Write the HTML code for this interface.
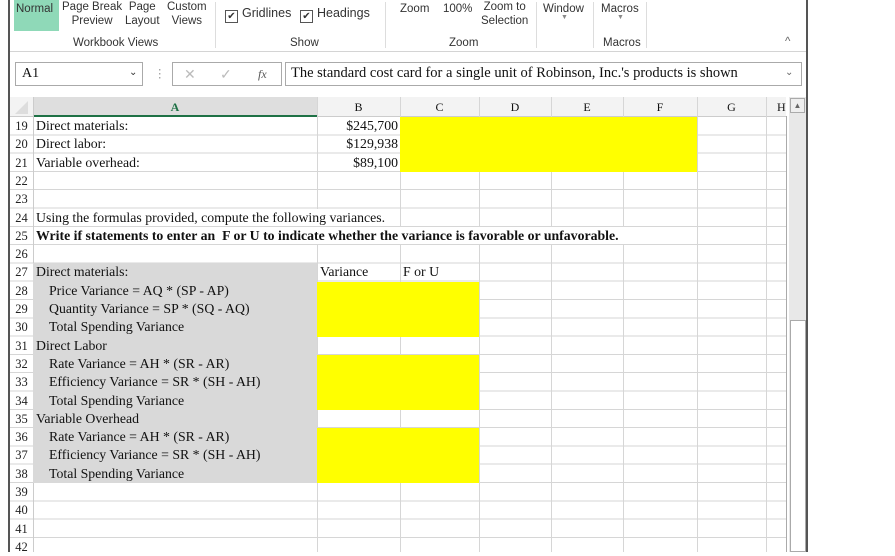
<!DOCTYPE html>
<html><head><style>
body{margin:0;width:895px;height:552px;overflow:hidden;background:#fff;position:relative;font-family:"Liberation Serif",serif;}
.a{position:absolute;}
.s{font-family:"Liberation Sans",sans-serif;font-size:11.5px;color:#333;}
.t{font-size:13.8px;color:#111;white-space:nowrap;line-height:18px;}
.rn{position:absolute;left:10px;width:23px;text-align:center;font-size:12.5px;color:#222;line-height:18px;}
.cb{display:inline-block;width:11px;height:11px;border:1px solid #555;vertical-align:-2px;margin-right:4px;font-size:10px;line-height:11px;text-align:center;}
.v{position:absolute;top:97px;width:1px;height:455px;background:#d6d6d6}
</style></head><body>
<div class="a" style="left:8px;top:0;width:2px;height:552px;background:#555"></div>
<div class="a" style="left:806px;top:0;width:2px;height:552px;background:#555"></div>
<div class="a" style="left:14px;top:0;width:45px;height:31px;background:#8fd9b8"></div>
<div class="a s" style="left:16px;top:3px">Normal</div>
<div class="a s" style="left:62px;top:0;text-align:center;line-height:14px">Page Break<br>Preview</div>
<div class="a s" style="left:125px;top:0;text-align:center;line-height:14px">Page<br>Layout</div>
<div class="a s" style="left:167px;top:0;text-align:center;line-height:14px">Custom<br>Views</div>
<div class="a s" style="left:73px;top:37px">Workbook Views</div>
<div class="a" style="left:215px;top:2px;width:1px;height:46px;background:#ddd"></div>
<div class="a s" style="left:225px;top:6px;font-size:12.5px"><span class="cb">✔</span>Gridlines</div>
<div class="a s" style="left:300px;top:6px;font-size:12.5px"><span class="cb">✔</span>Headings</div>
<div class="a s" style="left:290px;top:37px">Show</div>
<div class="a" style="left:385px;top:2px;width:1px;height:46px;background:#ddd"></div>
<div class="a s" style="left:400px;top:3px">Zoom</div>
<div class="a s" style="left:443px;top:3px">100%</div>
<div class="a s" style="left:481px;top:0;text-align:center;line-height:14px">Zoom to<br>Selection</div>
<div class="a s" style="left:449px;top:37px">Zoom</div>
<div class="a" style="left:536px;top:2px;width:1px;height:46px;background:#ddd"></div>
<div class="a s" style="left:543px;top:3px">Window</div>
<div class="a s" style="left:561px;top:14px;font-size:7px;color:#888">▼</div>
<div class="a" style="left:593px;top:2px;width:1px;height:46px;background:#ddd"></div>
<div class="a s" style="left:601px;top:3px">Macros</div>
<div class="a s" style="left:617px;top:14px;font-size:7px;color:#888">▼</div>
<div class="a s" style="left:603px;top:37px">Macros</div>
<div class="a" style="left:646px;top:2px;width:1px;height:46px;background:#ddd"></div>
<div class="a s" style="left:785px;top:36px;color:#666">^</div>
<div class="a" style="left:10px;top:51px;width:796px;height:1px;background:#d4d4d4"></div>
<div class="a" style="left:15px;top:62px;width:128px;height:24px;border:1px solid #aaa;box-sizing:border-box"></div>
<div class="a t" style="left:22px;top:65px;font-size:14px">A1</div>
<div class="a s" style="left:129px;top:67px;font-size:10px">⌄</div>
<div class="a s" style="left:154px;top:66px;color:#999">⋮</div>
<div class="a" style="left:172px;top:62px;width:110px;height:24px;border:1px solid #aaa;box-sizing:border-box"></div>
<div class="a s" style="left:184px;top:66px;font-size:14px;color:#bbb">✕</div>
<div class="a s" style="left:220px;top:66px;font-size:14px;color:#bbb">✓</div>
<div class="a t" style="left:258px;top:65px;font-size:12px;font-style:italic;color:#555">fx</div>
<div class="a" style="left:285px;top:62px;width:517px;height:24px;border:1px solid #aaa;box-sizing:border-box"></div>
<div class="a t" style="left:291px;top:64px;font-size:14.5px">The standard cost card for a single unit of Robinson, Inc.'s products is shown</div>
<div class="a s" style="left:785px;top:67px;font-size:10px;color:#666">⌄</div>
<!-- header row -->
<div class="a" style="left:10px;top:97px;width:776px;height:20px;background:#f3f3f3;border-bottom:1px solid #ccc;box-sizing:border-box"></div>
<div class="a" style="left:33px;top:97px;width:284px;height:20px;background:#dedede;border-bottom:2px solid #1e7145;box-sizing:border-box"></div>
<div class="a" style="left:15px;top:101px;width:0;height:0;border-left:13px solid transparent;border-bottom:13px solid #ddd"></div>
<!-- grid -->
<div class="a" style="left:10px;top:117px;width:776px;height:435px;background:repeating-linear-gradient(to bottom,transparent 0,transparent 17.3px,#d6d6d6 17.3px,#d6d6d6 18.3px)"></div>
<div class="v" style="left:33px;background:#ccc"></div>
<div class="v" style="left:317px"></div><div class="v" style="left:400px"></div><div class="v" style="left:479px"></div><div class="v" style="left:551px"></div><div class="v" style="left:623px"></div><div class="v" style="left:697px"></div><div class="v" style="left:766px"></div>
<div class="a" style="left:786px;top:116px;width:1px;height:436px;background:#aaa"></div>
<!-- header labels -->
<div class="a t" style="left:33px;top:98px;width:284px;text-align:center;font-size:12px;color:#1e7145;font-weight:bold">A</div>
<div class="a t" style="left:317px;top:98px;width:83px;text-align:center;font-size:12px">B</div>
<div class="a t" style="left:400px;top:98px;width:79px;text-align:center;font-size:12px">C</div>
<div class="a t" style="left:479px;top:98px;width:72px;text-align:center;font-size:12px">D</div>
<div class="a t" style="left:551px;top:98px;width:72px;text-align:center;font-size:12px">E</div>
<div class="a t" style="left:623px;top:98px;width:74px;text-align:center;font-size:12px">F</div>
<div class="a t" style="left:697px;top:98px;width:69px;text-align:center;font-size:12px">G</div>
<div class="a t" style="left:777px;top:98px;font-size:12px">H</div>
<!-- fills -->
<div class="a" style="left:33px;top:263.4px;width:284px;height:219.6px;background:#d9d9d9"></div>
<div class="a" style="left:400px;top:117px;width:297px;height:55px;background:#ffff00"></div>
<div class="a" style="left:317px;top:281.7px;width:162px;height:54.9px;background:#ffff00"></div>
<div class="a" style="left:317px;top:354.9px;width:162px;height:54.9px;background:#ffff00"></div>
<div class="a" style="left:317px;top:428.1px;width:162px;height:54.9px;background:#ffff00"></div>
<!-- overflow rows white -->
<div class="a" style="left:34px;top:208.5px;width:350px;height:17.3px;background:#fff"></div>
<div class="a" style="left:34px;top:226.8px;width:590px;height:17.3px;background:#fff"></div>
<!-- scrollbar -->
<div class="a" style="left:789px;top:97px;width:17px;height:455px;background:#e8e8e8"></div>
<div class="a" style="left:790px;top:98px;width:15px;height:15px;border:1px solid #aaa;background:#eee;box-sizing:border-box;font-size:8px;text-align:center;line-height:13px;color:#666;font-family:sans-serif">▲</div>
<div class="a" style="left:790px;top:320px;width:16px;height:232px;border:1px solid #aaa;background:#fff;box-sizing:border-box"></div>
<div class="rn" style="top:117px">19</div><div class="rn" style="top:135.3px">20</div><div class="rn" style="top:153.6px">21</div><div class="rn" style="top:171.9px">22</div><div class="rn" style="top:190.2px">23</div><div class="rn" style="top:208.5px">24</div><div class="rn" style="top:226.8px">25</div><div class="rn" style="top:245.1px">26</div><div class="rn" style="top:263.4px">27</div><div class="rn" style="top:281.7px">28</div><div class="rn" style="top:300px">29</div><div class="rn" style="top:318.3px">30</div><div class="rn" style="top:336.6px">31</div><div class="rn" style="top:354.9px">32</div><div class="rn" style="top:373.2px">33</div><div class="rn" style="top:391.5px">34</div><div class="rn" style="top:409.8px">35</div><div class="rn" style="top:428.1px">36</div><div class="rn" style="top:446.4px">37</div><div class="rn" style="top:464.7px">38</div><div class="rn" style="top:483px">39</div><div class="rn" style="top:501.3px">40</div><div class="rn" style="top:519.6px">41</div><div class="rn" style="top:537.9px">42</div>
<div class="a t" style="left:36px;top:117px">Direct materials:</div>
<div class="a t" style="left:36px;top:135.3px">Direct labor:</div>
<div class="a t" style="left:36px;top:153.6px">Variable overhead:</div>
<div class="a t" style="left:317px;top:117px;width:81px;text-align:right">$245,700</div>
<div class="a t" style="left:317px;top:135.3px;width:81px;text-align:right">$129,938</div>
<div class="a t" style="left:317px;top:153.6px;width:81px;text-align:right">$89,100</div>
<div class="a t" style="left:36px;top:208.5px">Using the formulas provided, compute the following variances.</div>
<div class="a t" style="left:36px;top:226.8px;font-weight:bold">Write if statements to enter an &nbsp;F or U to indicate whether the variance is favorable or unfavorable.</div>
<div class="a t" style="left:36px;top:263.4px">Direct materials:</div>
<div class="a t" style="left:320px;top:263.4px">Variance</div>
<div class="a t" style="left:403px;top:263.4px">F or U</div>
<div class="a t" style="left:49px;top:281.7px">Price Variance = AQ * (SP - AP)</div>
<div class="a t" style="left:49px;top:300px">Quantity Variance = SP * (SQ - AQ)</div>
<div class="a t" style="left:49px;top:318.3px">Total Spending Variance</div>
<div class="a t" style="left:36px;top:336.6px">Direct Labor</div>
<div class="a t" style="left:49px;top:354.9px">Rate Variance = AH * (SR - AR)</div>
<div class="a t" style="left:49px;top:373.2px">Efficiency Variance = SR * (SH - AH)</div>
<div class="a t" style="left:49px;top:391.5px">Total Spending Variance</div>
<div class="a t" style="left:36px;top:409.8px">Variable Overhead</div>
<div class="a t" style="left:49px;top:428.1px">Rate Variance = AH * (SR - AR)</div>
<div class="a t" style="left:49px;top:446.4px">Efficiency Variance = SR * (SH - AH)</div>
<div class="a t" style="left:49px;top:464.7px">Total Spending Variance</div>
</body></html>
